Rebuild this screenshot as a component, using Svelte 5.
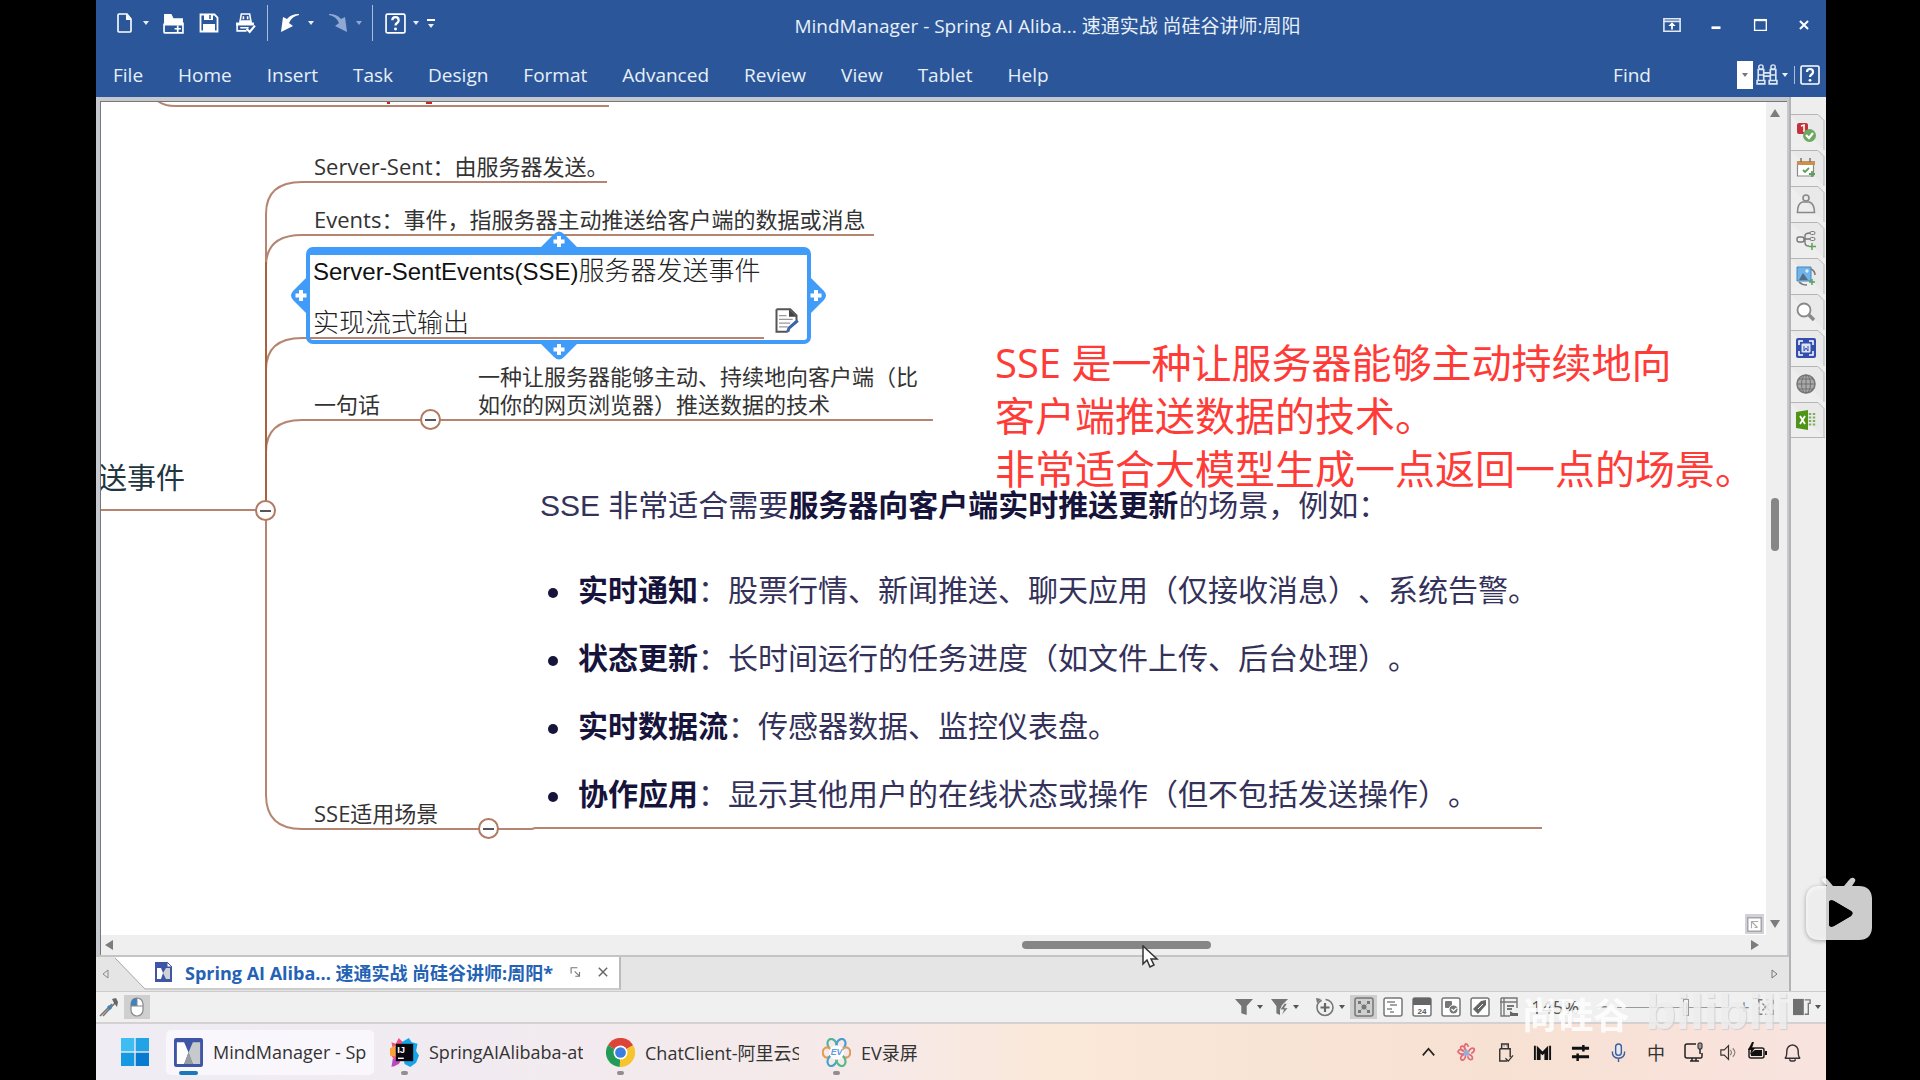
<script>
  const icons = {
    file: '<path d="M4 1h8l4 5v12q0 1-1 1H4q-1 0-1-1V2q0-1 1-1z" fill="none" stroke="#fff" stroke-width="1.6"/><path d="M11 1v6h5z" fill="#fff"/>',
    open: '<path d="M1 1h7l2 4h9v7H1z" fill="#fff"/><path d="M1 10v8q0 1 1 1h17V9" fill="none" stroke="#fff" stroke-width="1.6"/><path d="M14 12v6M11 15h6" stroke="#fff" stroke-width="1.6"/>',
    save: '<path d="M1.5 1.5h14l3 3v14h-17z" fill="none" stroke="#fff" stroke-width="1.8"/><path d="M5 1h9v6H5zM4 11h12v8H4z" fill="#fff"/><path d="M11 2v4" stroke="#2b579a" stroke-width="1.5"/>',
    print: '<path d="M5 7l1-6h8l1 6M8 3v3M12 3v3" fill="none" stroke="#fff" stroke-width="1.5"/><path d="M1 9h17v3H1zM4 7h12v3H4z" fill="#fff"/><path d="M2 11v6h9M5 14h8" fill="none" stroke="#fff" stroke-width="1.5"/><path d="M11 15l3 3 5-6" fill="none" stroke="#fff" stroke-width="2"/>',
    undo: '<path d="M19 1Q11 1 7 6L3 4 1 19l12-6-4-3q3-7 10-8z" fill="#fff"/>',
    redo: '<path d="M1 1Q9 1 13 6l4-2 2 15-12-6 4-3Q8 3 1 2z" fill="#8fa9d2"/>',
    help: '<rect x="1" y="1" width="18" height="18" rx="1.5" fill="none" stroke="#fff" stroke-width="1.6"/><path d="M7 7q0-3 3-3t3 3q0 1.500-1.500 2.500T10 12" fill="none" stroke="#fff" stroke-width="2.200"/><circle cx="10" cy="15.300" r="1.400" fill="#fff"/>',
    ribbon: '<path d="M1 3h18v14H1zM1 6h18" fill="none" stroke="#dfe8f5" stroke-width="1.8"/><path d="M10 7l4 4h-3v4H9v-4H6z" fill="#fff"/>',
    minimize: '<path d="M5 13h10" stroke="#fff" stroke-width="3"/>',
    maximize: '<path d="M4 4h13v12H4z" fill="none" stroke="#fff" stroke-width="1.500"/><path d="M4 4.500h13" stroke="#fff" stroke-width="2.500"/>',
    close: '<path d="M5.500 5.500l9 9M14.500 5.500l-9 9" stroke="#fff" stroke-width="2.200"/>',
    find: '<path d="M2 5h5v5H2zM13 5h5v5h-5zM2 10v5M7 10v5M13 10v5M18 10v5M7 8h6M7 11h6M1 15h7v3H1zM12 15h7v3h-7z" fill="none" stroke="#dce6f5" stroke-width="1.500"/><circle cx="4.500" cy="2.800" r="2" fill="none" stroke="#dce6f5" stroke-width="1.300"/><circle cx="15.500" cy="2.800" r="2" fill="none" stroke="#dce6f5" stroke-width="1.300"/>',
    marker: '<rect x="1" y="1" width="11" height="11" rx="2" fill="#c3313a"/><path d="M5 4l3-1v7" stroke="#fff" stroke-width="1.600" fill="none"/><circle cx="13.500" cy="13.500" r="6.500" fill="#6da863"/><path d="M10 13l3 3 4-5" fill="none" stroke="#fff" stroke-width="2.200"/>',
    task: '<path d="M1.500 4h16v14h-16z" fill="#fff" stroke="#8a8a8a" stroke-width="1.200"/><path d="M1 3h18v4H1z" fill="#c9904f"/><path d="M5 0v4M14 0v4" stroke="#777" stroke-width="1.500"/><path d="M7 12l2 2 4-4M16 13v6M13 16h6" fill="none" stroke="#5ba158" stroke-width="1.800"/>',
    person: '<circle cx="10" cy="4" r="3" fill="none" stroke="#888" stroke-width="1.600"/><path d="M1.500 18.500q0-9 5-10.500h7q5 2 5 10.500z" fill="none" stroke="#888" stroke-width="1.600"/>',
    parts: '<rect x="1" y="7" width="7" height="5" rx="2" fill="none" stroke="#777" stroke-width="1.400"/><path d="M8 9h6M9 9V6q0-3 5-3M9 9v4q0 3 4 3" fill="none" stroke="#777" stroke-width="1.400"/><rect x="14" y="1.500" width="5" height="3" rx="1.500" fill="none" stroke="#777"/><rect x="14" y="7.500" width="5" height="3" rx="1.500" fill="none" stroke="#777"/><path d="M16 13v7M13 16.500h7" stroke="#5ba158" stroke-width="1.500"/>',
    image: '<path d="M1 1h14v14H1z" fill="#6fb4ea" stroke="#4788bd"/><path d="M3 14l4-7 5 7z" fill="#566c80"/><path d="M15 3q4 2 4 6M3 16q3 3 8 3" fill="none" stroke="#777" stroke-width="1.500"/><circle cx="11" cy="5" r="1.700" fill="#dceefa"/><path d="M16 13v6M13 16h6" stroke="#5ba158" stroke-width="1.500"/>',
    search: '<circle cx="8" cy="8" r="6.500" fill="#fff" stroke="#888" stroke-width="1.800"/><path d="M13 13l5 5" stroke="#888" stroke-width="3.400"/>',
    snap: '<rect x="0" y="0" width="20" height="20" rx="2" fill="#344eae"/><path d="M3 7V3h4M13 3h4v4M17 13v4h-4M7 17H3v-4" fill="none" stroke="#fff" stroke-width="1.500"/><rect x="5.500" y="5.500" width="9" height="9" rx="1" fill="#dfe4f5"/><path d="M8 8v5l2-3 2 3V8" fill="none" stroke="#344eae"/>',
    globe: '<circle cx="10" cy="10" r="9" fill="#aaa" stroke="#777" stroke-width="1.500"/><path d="M1 10h18M3 5h14M3 15h14M10 1v18" stroke="#707070" fill="none"/><ellipse cx="10" cy="10" rx="4.500" ry="9" fill="none" stroke="#707070"/>',
    excel: '<path d="M0 2l12-2v20L0 18z" fill="#4f9416"/><path d="M4 6l5 8M9 6l-5 8" stroke="#fff" stroke-width="1.800"/><path d="M14 3v14M18 3v14" stroke="#7fae5c" stroke-width="2.400" stroke-dasharray="2 1.500"/>',
    filter: '<path d="M0 1h20l-7 8v10l-6-2V9z" fill="#757575"/>',
    power: '<path d="M0 1h19l-7 7-2 6v5l-4-2V9z" fill="#757575"/><path d="M15 6l-5 7h4l-2 6 7-8h-4l3-5z" fill="#757575" stroke="#f0f0f0" stroke-width=".700"/>',
    detail: '<circle cx="10" cy="10.500" r="8" fill="none" stroke="#777" stroke-width="1.600" stroke-dasharray="34 4"/><path d="M10 6v9M5.500 10.500h9" stroke="#666" stroke-width="2.200"/><path d="M1 1l5 1-4 4z" fill="#777"/>',
    map: '<rect x="1" y="1" width="18" height="18" rx="2" fill="none" stroke="#777" stroke-width="1.500"/><path d="M5 5l10 10M15 5L5 15" stroke="#999"/><circle cx="10" cy="10" r="2.500" fill="#777"/><path d="M4 4h3v3H4zM13 4h3v3h-3zM4 13h3v3H4zM13 13h3v3h-3z" fill="#777"/>',
    outline: '<rect x="1" y="1" width="18" height="18" rx="2" fill="#fff" stroke="#777" stroke-width="1.500"/><path d="M4 5h8M7 8h7M4 12h5M7 15h4" stroke="#888" stroke-width="1.300"/>',
    schedule: '<rect x="1" y="1" width="18" height="18" rx="2" fill="#fff" stroke="#777" stroke-width="1.500"/><path d="M1 1h18v7H1z" fill="#666"/><text x="10" y="16.500" font-size="8" font-family="Liberation Sans" font-weight="bold" text-anchor="middle" fill="#555">24</text>',
    icon: '<rect x="1" y="1" width="18" height="18" rx="2" fill="#fff" stroke="#777" stroke-width="1.500"/><rect x="4" y="4" width="7" height="7" rx="1" fill="#777"/><circle cx="12.500" cy="12.500" r="4.500" fill="#777" stroke="#fff"/><path d="M10.500 12l2 2 3-3" fill="none" stroke="#fff" stroke-width="1.200"/>',
    tag: '<rect x="1" y="1" width="18" height="18" rx="2" fill="#fff" stroke="#777" stroke-width="1.500"/><path d="M11 4l5-1v5l-8 9-5-5z" fill="#666"/><path d="M8 12l5-5" stroke="#fff"/>',
    gantt: '<path d="M2 1h16v10M2 1v18h9M1 5h17M5 1v18" fill="none" stroke="#777" stroke-width="1.400"/><path d="M8 9h7M8 12h5" stroke="#777" stroke-width="1.800"/><path d="M11 19v-5l3 2h5v3z" fill="#666"/>',
    fit: '<path d="M2 6V2h4M10 2h3M18 2v5M18 13v5h-4M2 10v4M2 15v3h4M9 18h3" fill="none" stroke="#777" stroke-width="1.600"/><circle cx="10" cy="10" r="2" fill="#888"/><path d="M6 6l2 2M14 6l-2 2M6 14l2-2M14 14l-2-2" stroke="#888" stroke-width="1.500"/>',
    panel: '<path d="M0 1h12v18H0z" fill="#707070"/><path d="M13 2h6v4h-2v12h-4" fill="none" stroke="#777" stroke-width="1.500"/>',
    brush: '<path d="M1 19L13 7M4 19L16 6" stroke="#777" stroke-width="1.600"/><path d="M13 2l4-1 2 4-1 5-3-4z" fill="#666"/><path d="M9 9l3 3" stroke="#3d84c4" stroke-width="3"/>',
    mouse: '<rect x="4" y="1" width="12" height="18" rx="6" fill="#fff" stroke="#888" stroke-width="1.200"/><path d="M4 9V7q0-6 6-6v8z" fill="#3f82bd"/><path d="M10 1v8M4 9h12" stroke="#888"/>',
    mind: '<rect x="0" y="0" width="20" height="20" rx="1.500" fill="#3f56a6"/><path d="M2 3h5l3 7-3 8H2z" fill="#fff"/><path d="M18 3h-5l-3 7 3 8h5z" fill="#c7cacc"/><path d="M10 10l3 8H7z" fill="#999ea1"/>',
    windows: '<path d="M0 0h9.500v9.500H0z" fill="#3dbdf2"/><path d="M10.500 0H20v9.500h-9.500z" fill="#22a3e6"/><path d="M0 10.500h9.500V20H0z" fill="#1599e2"/><path d="M10.500 10.500H20V20h-9.500z" fill="#087ad0"/>',
    idea: '<path d="M1 3l3 1 2-4 3 3 1 7-4 8-4 2 1-5-3-4 2-3z" fill="#f0527f"/><path d="M0 7l4-2v8l-4-1z" fill="#f9a13a"/><path d="M8 3l5-3 2 3 4 1-1 5 2 3-2 5-4 3-4-2z" fill="#16a6e8"/><path d="M2 14l5 3-6 3z" fill="#b04bd0"/><path d="M4 4h12v12H4z" fill="#0b0710"/><text x="5" y="10.500" font-size="6.500" font-family="Liberation Sans" font-weight="bold" fill="#fff">IJ</text><path d="M5.500 14h4" stroke="#fff"/>',
    chrome: '<path d="M10 10L1.300 5A10 10 0 0 1 18.700 5z" fill="#dc4437"/><path d="M10 10L1.300 5A10 10 0 0 0 9.500 20z" fill="#239a55"/><path d="M10 10l8.700-5A10 10 0 0 1 9.500 20z" fill="#f6c42d"/><circle cx="10" cy="10" r="4.800" fill="#fff"/><circle cx="10" cy="10" r="3.700" fill="#3b7de0"/>',
    ev: '<g fill="none" stroke-width="1.500"><ellipse cx="7" cy="4.500" rx="3" ry="4" transform="rotate(-25 7 4.500)" stroke="#4db59a"/><ellipse cx="13" cy="4.500" rx="3" ry="4" transform="rotate(25 13 4.500)" stroke="#4a9bd0"/><ellipse cx="3.500" cy="10" rx="3" ry="3.500" stroke="#e69a58"/><ellipse cx="16.500" cy="10" rx="3" ry="3.500" stroke="#dc9b62"/><ellipse cx="7" cy="15.500" rx="3" ry="4" transform="rotate(25 7 15.500)" stroke="#47a4c6"/><ellipse cx="13" cy="15.500" rx="3" ry="4" transform="rotate(-25 13 15.500)" stroke="#58b78a"/></g><circle cx="10" cy="10" r="5" fill="#fff"/><text x="10" y="12" font-size="6" font-family="Liberation Sans" font-style="italic" font-weight="bold" text-anchor="middle" fill="#5b9be0">EV</text>',
    up: '<path d="M4 13l6-7 6 7" fill="none" stroke="#222" stroke-width="1.800"/>',
    flower: '<g fill="none" stroke="#df6b77" stroke-width="1.800"><path d="M10 8Q6 5 9 1q2 0 3 3M12 9q3-5 6-3 1 3-3 5M12 12q5 1 4 5-3 2-5-3M9 12q0 6-4 6-3-3 2-6M8 11q-5 2-7-2 2-4 6 0M8 8Q3 8 4 4q2-2 5 2"/></g><circle cx="10" cy="10.500" r="3" fill="#90aee0"/>',
    usb: '<path d="M7 1h7v5H7zM5 6h11v9M5 6v13h8" fill="none" stroke="#333" stroke-width="1.500"/><path d="M9 3h1M12 3h1" stroke="#333"/><path d="M11 16l3 3 5-6" fill="none" stroke="#333" stroke-width="1.300"/>',
    mlogo: '<path d="M1 3h2v15H1zM4 3l6 6 6-6v15h-4v-7l-2 2-2-2v7H4zM17 3h2v15h-2z" fill="#111"/>',
    mixer: '<path d="M1 5.500h18M1 14.500h18" stroke="#111" stroke-width="3"/><path d="M13 2v7M7 11v8" stroke="#111" stroke-width="2.600"/>',
    mic: '<rect x="7" y="1" width="6" height="12" rx="3" fill="#e5eaf5" stroke="#3c5f9e" stroke-width="1.500"/><path d="M3.500 9q0 7 6.500 7t6.500-7M10 16v4" fill="none" stroke="#3c5f9e" stroke-width="1.500"/>',
    monitor: '<path d="M12 2H3q-2 0-2 2v10q0 2 2 2h14q1 0 1-2v-3M6 19h9M8 16v3M12 16v3" fill="none" stroke="#222" stroke-width="1.500"/><rect x="14" y="1" width="4" height="6" rx="1" fill="#999" stroke="#222"/><path d="M16 7v5" stroke="#222" stroke-width="1.500"/>',
    speaker: '<path d="M1 7h4l5-5v16l-5-5H1z" fill="none" stroke="#333" stroke-width="1.400"/><path d="M12 7q3 3 0 6M15 5q5 5 0 10" fill="none" stroke="#8a7e78" stroke-width="1.300"/>',
    battery: '<rect x="1" y="6" width="15" height="10" rx="2" fill="none" stroke="#222" stroke-width="1.500"/><path d="M7 8h7v6H3v-3zM17 9h2v4h-2z" fill="#111"/><path d="M4 0L0 8h3l-1 5 5-7H4l2-6z" fill="#111"/>',
    bell: '<path d="M2 16q2-1 2-7t6-7q6 1 6 7t2 7zM7 17q0 2 3 2t3-2" fill="none" stroke="#333" stroke-width="1.500"/>',
    note: '<path d="M2 1h11l5 5v4M2 1v18h9" fill="none" stroke="#555" stroke-width="1.600"/><path d="M12 1v6h6z" fill="#444"/><path d="M4 6h6M4 9h11M4 12h9M4 15h7" stroke="#999"/><path d="M11 19l1-3 7-6" fill="none" stroke="#3d64a8" stroke-width="2.400"/>',
    popout: '<path d="M3 12V4h9M8 9l7 7M15 10v6H9" fill="none" stroke="#777" stroke-width="1.600"/>',
    cross: '<path d="M3 3l14 14M17 3L3 17" stroke="#666" stroke-width="2.400"/>',
    corner: '<rect x="1" y="1" width="18" height="18" fill="#fff" stroke="#a5a5ad" stroke-width="2"/><path d="M6 15V6h9M6 6l8 8M10 14h4" fill="none" stroke="#aaa" stroke-width="1.500"/>'
  };

  const menus = ['File', 'Home', 'Insert', 'Task', 'Design', 'Format', 'Advanced', 'Review', 'View', 'Tablet', 'Help'];
  const windowButtons = ['ribbon', 'minimize', 'maximize', 'close'];
  const sideTabs = ['marker', 'task', 'person', 'parts', 'image', 'search', 'snap', 'globe', 'excel'];
  const views = ['map', 'outline', 'schedule', 'icon', 'tag', 'gantt'];

  // positions are relative to the top left of the map canvas
  const topics = [
    { x: 213, y: 50, lines: ['Server-Sent：由服务器发送。'] },
    { x: 213, y: 103, lines: ['Events：事件，指服务器主动推送给客户端的数据或消息'] },
    { x: 213, y: 288, lines: ['一句话'] },
    { x: 377, y: 260, lines: ['一种让服务器能够主动、持续地向客户端（比', '如你的网页浏览器）推送数据的技术'] },
    { x: 213, y: 697, lines: ['SSE适用场景'] }
  ];

  const toggles = [
    { x: 165, y: 409 },
    { x: 330, y: 318 },
    { x: 388, y: 727 }
  ];

  const scenes = [
    { name: '实时通知', text: '股票行情、新闻推送、聊天应用（仅接收消息）、系统告警。' },
    { name: '状态更新', text: '长时间运行的任务进度（如文件上传、后台处理）。' },
    { name: '实时数据流', text: '传感器数据、监控仪表盘。' },
    { name: '协作应用', text: '显示其他用户的在线状态或操作（但不包括发送操作）。' }
  ];

  const apps = [
    { icon: 'mind', title: 'MindManager - Spring AI', active: true },
    { icon: 'idea', title: 'SpringAIAlibaba-atguigu' },
    { icon: 'chrome', title: 'ChatClient-阿里云Spring' },
    { icon: 'ev', title: 'EV录屏' }
  ];

  const docTitle = 'Spring AI Aliba... 速通实战 尚硅谷讲师:周阳';
  let zoom = 62;
</script>

{#snippet icon(name, size = 20)}
  <svg class="icon" width={size} height={size} viewBox="0 0 20 20" aria-hidden="true">{@html icons[name]}</svg>
{/snippet}

{#snippet caret(label)}
  <button class="caret" aria-label={label}></button>
{/snippet}

<div class="desktop">
  <div class="app">
    <header>
      <div class="title-row">
        <div class="quick">
          <button aria-label="New">{@render icon('file')}</button>
          {@render caret('New options')}
          <button aria-label="Open">{@render icon('open', 21)}</button>
          <button aria-label="Save">{@render icon('save')}</button>
          <button aria-label="Print">{@render icon('print', 21)}</button>
          <span class="sep"></span>
          <button aria-label="Undo">{@render icon('undo')}</button>
          {@render caret('Undo options')}
          <button aria-label="Redo">{@render icon('redo')}</button>
          <span class="dim">{@render caret('Redo options')}</span>
          <span class="sep"></span>
          <button aria-label="Help">{@render icon('help', 21)}</button>
          {@render caret('Help options')}
          <span class="more">{@render caret('Customize toolbar')}</span>
        </div>
        <div class="title">MindManager - {docTitle}</div>
        <div class="window-buttons">
          {#each windowButtons as name}
            <button aria-label={name}>{@render icon(name, 18)}</button>
          {/each}
        </div>
      </div>
      <div class="menu-row">
        <nav>
          {#each menus as menu}
            <button>{menu}</button>
          {/each}
        </nav>
        <div class="find">
          <label for="find">Find</label>
          <input id="find" type="text" />
          <button class="drop" aria-label="Recent searches"></button>
          <button aria-label="Search">{@render icon('find', 22)}</button>
          {@render caret('Search options')}
          <span class="sep"></span>
          <button aria-label="Help">{@render icon('help')}</button>
        </div>
      </div>
    </header>

    <div class="workspace">
      <div class="document">
        <div class="frame">
          <div class="map-window">
            <main class="canvas">
              <svg class="lines" width="1665" height="833" viewBox="101 102 1665 833" aria-hidden="true">
                <g fill="none" stroke="#b58571" stroke-width="2">
                  <path d="M155 98q6 8 20 8h434" />
                  <path d="M266 510V214q0-32 36-32h305" />
                  <path d="M266 266q0-31 36-31h572" />
                  <path d="M266 370q0-32 36-32h462" />
                  <path d="M266 452q0-32 36-32h631" />
                  <path d="M101 510h165v285q0 34 36 34h230l3-1h1007" />
                </g>
                <path d="M266 262v248" stroke="#a9623f" stroke-width="2" />
                <path d="M387 103h3M426 103h6" stroke="#c22" stroke-width="2" />
              </svg>

              <div class="root-topic">送事件</div>

              {#each topics as topic}
                <div class="topic" style="left: {topic.x}px; top: {topic.y}px;">
                  {#each topic.lines as line}
                    <div>{line}</div>
                  {/each}
                </div>
              {/each}

              <div class="selected">
                <div class="selected-text">
                  <span>Server-SentEvents(SSE)</span>服务器发送事件<br />实现流式输出
                </div>
                <div class="note">{@render icon('note', 25)}</div>
                {#each ['top', 'right', 'bottom', 'left'] as side}
                  <button class="add {side}" aria-label="Add topic {side}">
                    <svg width="38" height="17" viewBox="0 0 38 17"><path d="M0 17L14 3q5-5 10 0l14 14z" fill="#419bf9" /><path d="M19 5v11M13.500 10.500h11" stroke="#fff" stroke-width="4" /></svg>
                  </button>
                {/each}
              </div>

              {#each toggles as toggle}
                <button class="toggle" aria-label="Collapse" style="left: {toggle.x}px; top: {toggle.y}px;"></button>
              {/each}

              <section class="scenes">
                <p>SSE 非常适合需要<b>服务器向客户端实时推送更新</b>的场景，例如：</p>
                <ul>
                  {#each scenes as scene}
                    <li><b>{scene.name}</b>：{scene.text}</li>
                  {/each}
                </ul>
              </section>

              <div class="remark">
                SSE 是一种让服务器能够主动持续地向<br />客户端推送数据的技术。<br />非常适合大模型生成一点返回一点的场景。
              </div>

              <button class="corner" aria-label="Overview">{@render icon('corner', 15)}</button>
            </main>
            <div class="vscroll">
              <span class="arrow up"></span>
              <span class="before"></span>
              <span class="thumb"></span>
              <span class="after"></span>
              <span class="arrow down"></span>
            </div>
            <div class="hscroll">
              <span class="arrow left"></span>
              <span class="before"></span>
              <span class="thumb">
                <svg class="cursor" width="18" height="24" viewBox="0 0 18 24" aria-hidden="true"><path d="M2 1v18l4-4 3 7 4-2-3-6h6z" fill="#fff" stroke="#333" stroke-width="1.500" /></svg>
              </span>
              <span class="after"></span>
              <span class="arrow right"></span>
            </div>
          </div>
        </div>
        <div class="tabs">
          <button class="tab-scroll" aria-label="Scroll tabs left"><svg width="8" height="10" viewBox="0 0 8 10"><path d="M6 1v8L1 5z" fill="none" stroke="#888" /></svg></button>
          <svg class="slant" width="30" height="35" viewBox="0 0 30 35" aria-hidden="true"><path d="M0 0h30v32z" fill="#fff" /><path d="M0 1l30 31" stroke="#aaa" /></svg>
          <div class="tab">
            <svg width="18" height="20" viewBox="0 0 18 20" aria-hidden="true"><path d="M0 0h12l5 5v15H0z" fill="#3f56a6" /><path d="M2 6h4l2 5-2 6H2z" fill="#fff" /><path d="M15 6h-4l-3 5 3 6h4z" fill="#d0d3d6" /><path d="M12 0v5h5z" fill="#fff" stroke="#3f56a6" /></svg>
            <a href="#map">{docTitle}*</a>
            <button aria-label="Pop out">{@render icon('popout', 14)}</button>
            <button aria-label="Close tab">{@render icon('cross', 12)}</button>
          </div>
          <button class="tab-scroll end" aria-label="Scroll tabs right"><svg width="8" height="10" viewBox="0 0 8 10"><path d="M2 1v8l5-4z" fill="none" stroke="#777" /></svg></button>
        </div>
      </div>
      <aside>
        {#each sideTabs as tab}
          <button aria-label={tab}>
            <svg class="shape" width="34" height="36" viewBox="0 0 34 36" aria-hidden="true"><path d="M0 .5h27l6 6V36" fill="#e9e9e9" stroke="#b5b5b5" /></svg>
            {@render icon(tab)}
          </button>
        {/each}
      </aside>
    </div>

    <div class="status">
      <button aria-label="Format painter">{@render icon('brush')}</button>
      <button class="on mouse" aria-label="Mouse mode">{@render icon('mouse')}</button>
      <div class="status-right">
        <button aria-label="Filter">{@render icon('filter', 18)}</button>
        {@render caret('Filter options')}
        <button aria-label="Power filter">{@render icon('power', 18)}</button>
        {@render caret('Power filter options')}
        <button class="detail" aria-label="Detail">{@render icon('detail')}</button>
        {@render caret('Detail options')}
        <div class="views">
          {#each views as view, i}
            <button class:on={i === 0} aria-label={view}>{@render icon(view)}</button>
          {/each}
        </div>
        <span class="percent">145%</span>
        <span class="step">−</span>
        <input type="range" aria-label="Zoom" bind:value={zoom} />
        <span class="step">+</span>
        <button aria-label="Fit map">{@render icon('fit', 18)}</button>
        <button class="panel" aria-label="Task panes">{@render icon('panel', 18)}</button>
        {@render caret('Task pane options')}
      </div>
    </div>

    <footer>
      <button class="start" aria-label="Start">{@render icon('windows', 28)}</button>
      {#each apps as app}
        <button class="task" class:active={app.active}>
          {@render icon(app.icon, 29)}
          <span>{app.title}</span>
        </button>
      {/each}
      <div class="tray">
        {#each ['up', 'flower', 'usb', 'mlogo', 'mixer', 'mic'] as name}
          <button aria-label={name}>{@render icon(name, 19)}</button>
        {/each}
        <button>中</button>
        <button aria-label="Display">{@render icon('monitor', 20)}</button>
        <button class="tight" aria-label="Volume">{@render icon('speaker', 17)}</button>
        <button class="tight" aria-label="Battery">{@render icon('battery')}</button>
        <button class="bell" aria-label="Notifications">{@render icon('bell', 19)}</button>
      </div>
    </footer>
  </div>

  <div class="watermark"><span>尚硅谷</span><em>bilibili</em></div>
  <button class="player" aria-label="Play">
    <svg width="68" height="64" viewBox="0 0 68 64"><path d="M17 3q3-3 6 1l5 6h11l5-6q3-4 6-1 1 2-1 4l-2 3h7q12 0 13 12v30q-1 12-13 12H14Q2 64 1 52V22q1-12 13-12h8l-4-4q-2-2-1-3zM24 26v23q1 3 5 1l17-10q3-3 0-5L29 25q-4-2-5 1z" fill="#fff" fill-opacity=".8" fill-rule="evenodd" /><path d="M24 26v23q1 3 5 1l17-10q3-3 0-5L29 25q-4-2-5 1z" fill="#000" /></svg>
  </button>
</div>

<style>
  :global(body) {
    margin: 0;
    background: #000;
  }

  .desktop {
    position: relative;
    min-height: 100vh;
    padding: 0 94px 0 96px;
    box-sizing: border-box;
    overflow: hidden;
    font-family: 'Open Sans', 'Noto Sans CJK SC', sans-serif;
    font-size: 18px;
    color: #333;
  }

  .app {
    display: flex;
    flex-direction: column;
    min-height: 100vh;
  }

  button {
    display: flex;
    align-items: center;
    justify-content: center;
    flex: none;
    padding: 0;
    border: 0;
    background: none;
    color: inherit;
    font: inherit;
  }

  .icon {
    display: block;
    flex: none;
  }

  header {
    height: 97px;
    background: #2b579a;
    color: #e8eff8;
    font-size: 19px;
  }

  .title-row,
  .menu-row,
  .quick,
  .window-buttons,
  nav,
  .find {
    display: flex;
    align-items: center;
  }

  .title-row {
    height: 50px;
  }

  .menu-row {
    height: 50px;
    padding: 0 6px 0 17px;
    justify-content: space-between;
  }

  .quick {
    gap: 4px;
    height: 46px;
    align-self: flex-start;
    padding-left: 13px;
  }

  .quick button {
    width: 32px;
  }

  button.caret,
  .quick button.caret {
    width: 8px;
  }

  .quick button.caret {
    margin: 0 3px 0 -3px;
  }

  .caret::after,
  .drop::after {
    content: '';
    border: 3px solid transparent;
    border-top: 4px solid currentColor;
    border-bottom: 0;
  }

  .dim {
    color: #8fa9d2;
  }

  .quick .more {
    padding-top: 3px;
    border-top: 2px solid #fff;
  }

  .quick .more :global(button.caret) {
    margin: 0;
  }

  .quick .sep {
    width: 1px;
    height: 36px;
    margin: 0 2px;
    background: #a9bcdb;
  }

  .title {
    flex: 1;
    padding-left: 10px;
    text-align: center;
  }

  .window-buttons button {
    width: 44px;
  }

  nav {
    gap: 35px;
  }

  .find {
    gap: 3px;
  }

  .find input {
    width: 80px;
    padding: 0;
    border: 0;
    background: transparent;
  }

  .drop {
    width: 16px;
    height: 28px;
    background: #fff;
    color: #777;
  }

  .find .sep {
    width: 1px;
    height: 18px;
    margin: 0 2px;
    background: #a9bcdb;
  }

  .workspace {
    flex: 1;
    display: flex;
    background: #eee;
  }

  .document {
    flex: 1;
    display: flex;
    flex-direction: column;
    min-width: 0;
    border-right: 2px solid #b3b3b5;
  }

  .frame {
    flex: 1;
    display: flex;
    padding: 4px 2px 0 4px;
    background: #c5c8ce;
    border-bottom: 2px solid #c4c4c4;
  }

  .map-window {
    flex: 1;
    display: grid;
    grid-template: 1fr 20px / 1fr 21px;
    min-width: 0;
    border-top: 1px solid #777;
    border-left: 1px solid #777;
    background: #efefef;
  }

  .canvas {
    position: relative;
    overflow: hidden;
    background: #fff;
  }

  .lines {
    position: absolute;
    left: 0;
    top: 0;
  }

  .root-topic {
    position: absolute;
    left: -3px;
    top: 354px;
    color: #22363f;
    font-size: 29px;
    line-height: 44px;
  }

  .topic {
    position: absolute;
    font-size: 22px;
    line-height: 28px;
    white-space: nowrap;
  }

  .selected {
    position: absolute;
    left: 205px;
    top: 145px;
    width: 505px;
    height: 97px;
    box-sizing: border-box;
    border: 4px solid #419bf9;
    border-top-width: 8px;
    border-radius: 7px;
  }

  .selected-text {
    margin: -10px 0 0 3px;
    color: #222;
    font-size: 26px;
    line-height: 51px;
    font-weight: 300;
    white-space: nowrap;
  }

  .selected-text span {
    color: #111;
    font-family: 'Liberation Sans', sans-serif;
    font-size: 24px;
    font-weight: 400;
  }

  .note {
    position: absolute;
    right: 8px;
    bottom: 7px;
  }

  .add {
    position: absolute;
    width: 38px;
    height: 17px;
  }

  .add.top {
    left: 230px;
    top: -24px;
  }

  .add.bottom {
    left: 230px;
    bottom: -20px;
    transform: rotate(180deg);
  }

  .add.left {
    left: -30px;
    top: 32px;
    transform: rotate(-90deg);
  }

  .add.right {
    right: -30px;
    top: 32px;
    transform: rotate(90deg);
  }

  .toggle {
    position: absolute;
    width: 21px;
    height: 21px;
    margin: -11px 0 0 -11px;
    border: 2px solid #b07a63;
    border-radius: 50%;
    background: #fff;
  }

  .toggle::after {
    content: '';
    width: 11px;
    height: 2px;
    background: #555;
  }

  .scenes {
    position: absolute;
    left: 439px;
    top: 382px;
    color: #34325a;
    font-family: 'Liberation Sans', 'Noto Sans CJK SC', sans-serif;
    font-size: 30px;
    line-height: 44px;
    white-space: nowrap;
    text-spacing-trim: space-all;
  }

  .scenes b {
    color: #17143c;
  }

  .scenes p {
    margin: 0 0 41px;
  }

  .scenes ul {
    display: flex;
    flex-direction: column;
    gap: 24px;
    margin: 0;
    padding: 0 0 0 38px;
    list-style: none;
  }

  .scenes li {
    display: flex;
    align-items: center;
  }

  .scenes li::before {
    content: '';
    width: 10px;
    height: 10px;
    margin: 4px 20px 0 -30px;
    border-radius: 50%;
    background: #17143c;
  }

  .remark {
    position: absolute;
    left: 894px;
    top: 234px;
    color: #ff3b38;
    font-size: 40px;
    line-height: 53px;
    white-space: nowrap;
  }

  .corner {
    position: absolute;
    right: 2px;
    bottom: 1px;
    width: 19px;
    height: 20px;
    background: #d2d2d6;
  }

  .vscroll,
  .hscroll {
    display: flex;
    align-items: center;
  }

  .vscroll {
    flex-direction: column;
    padding-right: 3px;
  }

  .hscroll {
    padding-right: 3px;
  }

  .arrow {
    display: flex;
    align-items: center;
    justify-content: center;
    width: 16px;
    height: 22px;
  }

  .arrow::after {
    content: '';
    width: 10px;
    height: 8px;
    background: #7c7c7c;
    clip-path: polygon(0 100%, 50% 0, 100% 100%);
  }

  .arrow.down::after {
    transform: rotate(180deg);
  }

  .arrow.left::after {
    transform: rotate(-90deg);
  }

  .arrow.right::after {
    transform: rotate(90deg);
  }

  .thumb {
    border-radius: 4px;
    background: #868686;
  }

  .vscroll .before {
    flex: 374;
  }

  .vscroll .thumb {
    flex: 54;
    width: 8px;
  }

  .vscroll .after {
    flex: 362;
  }

  .hscroll .before {
    flex: 905;
  }

  .hscroll .thumb {
    position: relative;
    flex: 189;
    height: 8px;
  }

  .hscroll .after {
    flex: 536;
  }

  .cursor {
    position: absolute;
    left: 63%;
    top: 4px;
  }

  .tabs {
    display: flex;
    height: 34px;
    background: #e5e5e5;
  }

  .tab-scroll {
    width: 19px;
  }

  .tab-scroll.end {
    margin: 0 6px 0 auto;
  }

  .tab {
    display: flex;
    align-items: center;
    height: 29px;
    padding: 0 10px 2px;
    border-right: 2px solid #bbb;
    border-bottom: 2px solid #ccc;
    background: #fff;
  }

  .tab a {
    margin: 0 16px 0 12px;
    color: #2362b5;
    font-size: 18px;
    font-weight: 700;
    text-decoration: none;
    white-space: nowrap;
  }

  .tab button:last-child {
    margin-left: 14px;
  }

  aside {
    width: 35px;
    padding-top: 17px;
  }

  aside button {
    position: relative;
    width: 34px;
    height: 36px;
    padding-right: 4px;
  }

  aside button:last-child {
    border-bottom: 1px solid #b5b5b5;
  }

  .shape {
    position: absolute;
    left: 0;
    top: 0;
  }

  aside button :global(.icon) {
    position: relative;
  }

  .status {
    display: flex;
    align-items: center;
    height: 33px;
    box-sizing: border-box;
    border-top: 1px solid #ccc;
    border-bottom: 2px solid #d5d0d2;
    background: #f0f0f0;
    color: #555;
  }

  .status > button {
    width: 26px;
    height: 24px;
  }

  .status .on {
    background: #cfcfcf;
  }

  .mouse {
    margin-left: 2px;
  }

  .status-right {
    display: flex;
    align-items: center;
    gap: 3px;
    margin-left: auto;
    padding-right: 4px;
  }

  .status-right > button {
    margin-left: 4px;
  }

  .status-right > button.caret {
    margin-left: 0;
  }

  .status-right > .detail {
    margin-left: 12px;
  }

  .status-right > .panel {
    margin-left: 15px;
  }

  .views {
    display: flex;
    gap: 2px;
    margin-left: 1px;
  }

  .views button {
    width: 27px;
    height: 24px;
  }

  .percent {
    width: 62px;
    margin-left: 6px;
    font-size: 19px;
  }

  .step {
    width: 12px;
    color: #888;
    font-size: 20px;
    line-height: 24px;
    text-align: center;
  }

  input[type='range'] {
    width: 112px;
    height: 18px;
    margin: 0 6px;
    appearance: none;
    background: linear-gradient(#999, #999) center / 100% 1px no-repeat;
  }

  input[type='range']::-webkit-slider-thumb {
    appearance: none;
    width: 6px;
    height: 17px;
    border: 1px solid #999;
    background: #f4f4f4;
  }

  footer {
    display: flex;
    align-items: center;
    gap: 8px;
    height: 56px;
    background: linear-gradient(90deg, #efecf3 0%, #f1ebf1 22%, #f6e9e8 45%, #fae8d9 55%, #f7e1d2 80%, #f9e3df 100%);
  }

  .start {
    width: 28px;
    margin: 0 9px 0 25px;
  }

  .task {
    position: relative;
    justify-content: flex-start;
    gap: 10px;
    width: 208px;
    height: 45px;
    padding: 0 7px 0 8px;
    border-radius: 5px;
  }

  .task span {
    overflow: hidden;
    white-space: nowrap;
  }

  .task.active {
    background: #f9f7fc;
  }

  .task::after {
    content: '';
    position: absolute;
    left: 19px;
    bottom: 0;
    width: 7px;
    height: 4px;
    border-radius: 2px;
    background: #928d92;
  }

  .task.active::after {
    left: 13px;
    width: 19px;
    background: #1a78bd;
  }

  .tray {
    display: flex;
    align-items: center;
    margin-left: auto;
    padding-right: 15px;
  }

  .tray button {
    width: 38px;
  }

  .tray .tight {
    width: 30px;
  }

  .watermark {
    position: absolute;
    right: 130px;
    bottom: 32px;
    display: flex;
    align-items: center;
    gap: 16px;
    color: #fff;
    font-size: 36px;
    font-weight: 700;
    line-height: 64px;
    opacity: 0.85;
    pointer-events: none;
  }

  .watermark span {
    padding-top: 8px;
  }

  .watermark em {
    color: #ededed;
    font-family: 'Liberation Sans', sans-serif;
    font-size: 50px;
    font-style: normal;
    text-shadow: 1px 1px 1px #ccc;
  }

  .player {
    position: absolute;
    right: 47px;
    bottom: 140px;
    filter: drop-shadow(0 1px 2px rgba(0, 0, 0, 0.4));
  }
</style>
